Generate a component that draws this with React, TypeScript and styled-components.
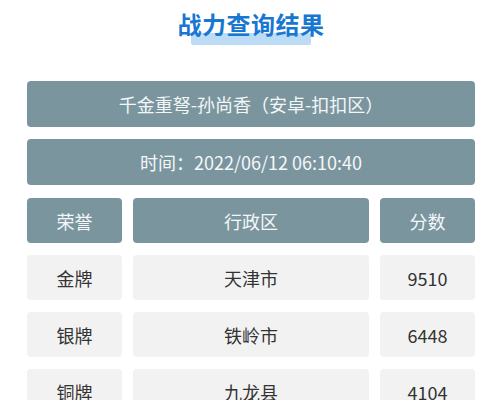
import React from "react";
import styled, { createGlobalStyle } from "styled-components";

const Global = createGlobalStyle`
  html, body { margin: 0; padding: 0; background: #ffffff; }
  body { font-family: "Noto Sans CJK SC", "Noto Sans", sans-serif; }
`;

const Page = styled.div`
  width: 502px;
  padding: 0 27px;
  box-sizing: border-box;
  display: flex;
  flex-direction: column;
  align-items: stretch;
`;

const TitleWrap = styled.div`
  display: flex;
  justify-content: center;
  padding-top: 8px;
  margin-bottom: 41px;
`;

const Title = styled.h1`
  position: relative;
  margin: 0;
  font-size: 24px;
  line-height: 32px;
  font-weight: 700;
  color: #1877d0;
  letter-spacing: 0.5px;
  z-index: 0;
  &::after {
    content: "";
    position: absolute;
    left: 13px;
    right: 14px;
    top: 25px;
    height: 12px;
    background: #bcdcf6;
    border-radius: 2px;
    z-index: -1;
  }
`;

const InfoBox = styled.div<{ $h: number }>`
  height: ${(p) => p.$h}px;
  background: #7b959f;
  border-radius: 4px;
  color: #f4f7f8;
  font-size: 18px;
  display: flex;
  align-items: center;
  justify-content: center;
  margin-bottom: 12px;
`;

const Table = styled.div`
  display: grid;
  grid-template-columns: 95px 1fr 95px;
  column-gap: 11px;
  row-gap: 12px;
  margin-top: 1px;
`;

const Cell = styled.div<{ $head?: boolean }>`
  height: 45px;
  border-radius: 4px;
  background: ${(p) => (p.$head ? "#7b959f" : "#f2f2f2")};
  color: ${(p) => (p.$head ? "#f4f7f8" : "#333333")};
  font-size: 18px;
  display: flex;
  align-items: center;
  justify-content: center;
`;

const rows = [
  ["金牌", "天津市", "9510"],
  ["银牌", "铁岭市", "6448"],
  ["铜牌", "九龙县", "4104"],
];

export default function App() {
  return (
    <>
      <Global />
      <Page>
        <TitleWrap>
          <Title>战力查询结果</Title>
        </TitleWrap>
        <InfoBox $h={46}>千金重弩-孙尚香（安卓-扣扣区）</InfoBox>
        <InfoBox $h={46}>时间：2022/06/12 06:10:40</InfoBox>
        <Table>
          <Cell $head>荣誉</Cell>
          <Cell $head>行政区</Cell>
          <Cell $head>分数</Cell>
          {rows.map((r) =>
            r.map((c, i) => <Cell key={r[0] + i}>{c}</Cell>)
          )}
        </Table>
      </Page>
    </>
  );
}
